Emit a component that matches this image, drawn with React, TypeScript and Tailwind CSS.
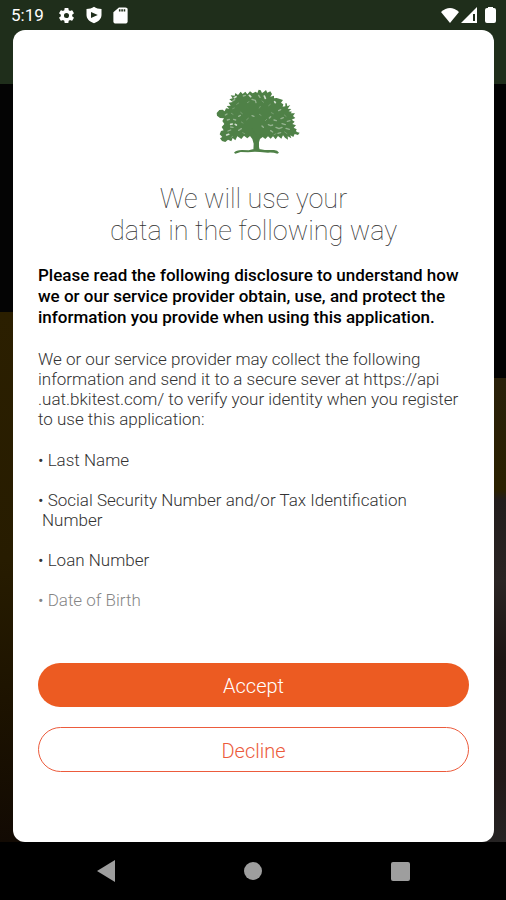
import type { ReactNode } from "react";

const items = [
	"Last Name",
	"Social Security Number and/or Tax Identification Number",
	"Loan Number",
	"Date of Birth",
];

function Icon({ className, children }: { className: string; children: ReactNode }) {
	return (
		<svg viewBox="0 0 24 24" fill="currentColor" className={className} aria-hidden="true">
			{children}
		</svg>
	);
}

function Tree() {
	return (
		<svg viewBox="48 42 252 198" className="h-[66px] w-[84px]" role="img" aria-label="Oak tree">
			<path
				fill="#4f8147"
				d="M160 228L161 206L157 192L150 183L142 190L132 182L124 192L112 184L106 196L98 189L94 199L84 194L76 201L66 198L60 190L67 186L59 178L63 168L71 166L65 156L73 147L67 138L72 130L60 129L51 122L50 114L58 105L68 104L74 109L78 100L88 101L80 93L92 92L86 83L98 81L88 73L98 70L92 61L104 62L106 54L114 60L122 50L128 57L136 50L142 58L150 49L158 55L167 50L172 54L176 44L182 46L186 54L192 50L198 45L202 53L211 49L216 57L211 65L222 62L222 70L230 69L240 72L249 75L243 83L250 88L248 95L256 94L256 85L260 85L262 94L271 90L263 101L274 102L266 109L276 110L272 115L285 115L279 123L286 129L275 134L284 140L277 147L288 151L281 158L290 163L287 170L299 173L294 180L284 177L280 186L271 181L274 190L263 184L264 194L255 188L249 181L244 191L234 183L227 193L219 184L212 191L204 184L196 192L188 186L180 192L177 202L177 216L180 228Z"
			/>
			<path
				fill="#4f8147"
				d="M102 233Q108 225 126 225L146 226L158 223L182 223L194 225L222 225Q233 226 237 233L232 236Q220 232 204 233L180 231Q160 229 144 232L122 231L106 236Z"
			/>
			<g fill="none" stroke="#fff" strokeLinecap="round" strokeLinejoin="round">
				<path
					strokeWidth="5"
					opacity=".75"
					d="M148 61L152 65M193 63L196 70M103 68L108 65M92 148L97 147M106 148L109 150M80 180L86 178M224 80L226 83"
				/>
				<path
					strokeWidth="4"
					opacity=".4"
					d="M98 78L104 74M130 63L136 61M156 73L166 76L168 83M176 61L180 67M116 124L121 121M101 133L107 135M82 135L88 133M92 156L99 157M116 166L124 161M84 168L92 165M156 122L162 124M205 149L212 152L218 150M228 157L237 161L246 157M246 146L256 149M258 160L268 163M212 167L218 171M234 175L242 173M222 135L229 137M243 131L250 128M262 139L270 137M208 129L212 125M236 107L242 104M76 120L81 117M186 153L190 157"
				/>
				<path
					strokeWidth="2"
					opacity=".35"
					d="M110 88L116 84M142 83L147 80M186 78L191 82M206 92L211 88M122 112L127 116M94 115L99 118M124 141L129 144M140 134L145 130M178 118L183 121M196 137L200 133M214 113L220 116M254 171L261 176M222 179L228 176M128 173L134 176M93 188L98 184M178 99L181 94M253 120L258 124M98 101L103 99"
				/>
			</g>
			<path
				fill="none"
				stroke="#4f8147"
				strokeWidth="3"
				d="M167 218L168 180L155 161M168 190L188 168L210 159M160 173L136 163M177 179L208 179M274 160L292 173"
			/>
		</svg>
	);
}

function StatusBar() {
	return (
		<header className="flex h-[30px] items-center justify-between pr-2 pl-[11px] text-white">
			<div className="flex items-center">
				<span className="w-[46px] text-[17px] leading-5">5:19</span>
				<Icon className="mr-[9px] size-[19px]">
					<path d="M19.14 12.94c.04-.3.06-.61.06-.94 0-.32-.02-.64-.07-.94l2.03-1.58a.49.49 0 0 0 .12-.61l-1.92-3.32a.49.49 0 0 0-.59-.22l-2.39.96c-.5-.38-1.03-.7-1.62-.94l-.36-2.54a.48.48 0 0 0-.48-.41h-3.84c-.24 0-.43.17-.47.41l-.36 2.54c-.59.24-1.13.57-1.62.94l-2.39-.96a.48.48 0 0 0-.59.22L2.74 8.87c-.12.21-.08.47.12.61l2.03 1.58c-.05.3-.09.63-.09.94s.02.64.07.94l-2.03 1.58a.49.49 0 0 0-.12.61l1.92 3.32c.12.22.37.29.59.22l2.39-.96c.5.38 1.03.7 1.62.94l.36 2.54c.05.24.24.41.48.41h3.84c.24 0 .44-.17.47-.41l.36-2.54c.59-.24 1.13-.56 1.62-.94l2.39.96c.22.08.47 0 .59-.22l1.92-3.32a.48.48 0 0 0-.12-.61zM12 15.2a3.2 3.2 0 1 1 0-6.4 3.2 3.2 0 0 1 0 6.4z" />
				</Icon>
				<Icon className="mr-2 size-[18px]">
					<path
						fillRule="evenodd"
						d="M12 1C9 3 6 4 2 4v8c0 5 4 9 10 11 6-2 10-6 10-11V4C18 4 15 3 12 1zM8 8l9 4-9 4z"
					/>
				</Icon>
				<Icon className="size-[19px]">
					<path
						fillRule="evenodd"
						d="M18 2H10L3 8v12c0 1 1 2 2 2h14c1 0 2-1 2-2V4c0-1-1-2-3-2zM10 4h2v3h-2zM13 4h2v3h-2zM16 4h2v3h-2z"
					/>
				</Icon>
			</div>
			<div className="flex items-center">
				<svg viewBox="0 0 20 18" className="h-[18px] w-5" fill="currentColor" aria-hidden="true">
					<path d="M10 17L1 6q9-8 18 0z" />
				</svg>
				<svg viewBox="0 0 20 18" className="h-[18px] w-5" fill="currentColor" aria-hidden="true">
					<path fillRule="evenodd" d="M17 1v16H1zM13 8h2v7h-2z" />
				</svg>
				<svg viewBox="0 0 14 18" className="ml-1 h-[18px] w-[14px]" fill="currentColor" aria-hidden="true">
					<path d="M4 1h5v1h1q2 0 2 2v11q0 2-2 2H3q-2 0-2-2V4q0-2 2-2h1z" />
				</svg>
			</div>
		</header>
	);
}

function NavBar() {
	return (
		<nav className="flex h-[58px] items-center justify-around bg-black px-8 text-[#9e9e9e]">
			<button type="button" aria-label="Back">
				<svg viewBox="0 0 20 22" className="h-[22px] w-5" fill="currentColor">
					<path d="M19 0v22L1 11z" />
				</svg>
			</button>
			<button type="button" aria-label="Home" className="size-[18px] rounded-full bg-[#9e9e9e]" />
			<button type="button" aria-label="Recent apps" className="size-[19px] rounded-xs bg-[#9e9e9e]" />
		</nav>
	);
}

function App() {
	return (
		<div className="relative isolate flex min-h-screen flex-col bg-black font-[Roboto,sans-serif]">
			{/* dimmed app behind the dialog */}
			<div className="absolute inset-0 -z-10 flex" aria-hidden="true">
				<div className="flex-1 bg-[linear-gradient(#1f2e1b_84px,#040404_84px,#040404_312px,#2b1f00_312px,#271c00_560px,#1d1300_700px,#120a03_842px)]" />
				<div className="flex-1 bg-[linear-gradient(#1f2e1b_84px,#020202_84px,#020202_378px,#29200a_378px,#2b2100_490px,#221d1c_500px,#2a2423_580px,#1d1513_660px,#221918_780px,#252323_842px)]" />
			</div>
			<StatusBar />
			<main className="mr-3 ml-[13px] flex flex-1 flex-col rounded-xl bg-white px-[25px] pt-[59px] pb-[70px]">
				<div className="flex justify-center pl-2">
					<Tree />
				</div>
				<h1 className="mt-7 text-center text-[27px] leading-8 font-thin text-[#333]">
					We will use your
					<br />
					data in the following way
				</h1>
				<p className="mt-[18px] text-[17px] leading-[21px] font-medium text-black">
					Please read the following disclosure to understand how we or our service provider obtain, use, and
					protect the information you provide when using this application.
				</p>
				<p className="mt-[21px] text-[17px] leading-5 font-light text-[#333]">
					We or our service provider may collect the following information and send it to a secure sever at
					https://api
					<wbr />
					.uat.bkitest.com/ to verify your identity when you register to use this application:
				</p>
				<ul className="mt-[21px] flex flex-col gap-5 text-[17px] leading-5 font-light text-[#333]">
					{items.map((item) => (
						<li key={item} className="pl-1 -indent-1 last:opacity-60">
							{`• ${item}`}
						</li>
					))}
				</ul>
				<div className="mt-auto flex flex-col gap-5 text-xl font-light">
					<button type="button" className="h-11 rounded-full bg-[#ec5b22] pt-[2px] text-white">
						Accept
					</button>
					<button type="button" className="h-[45px] rounded-full border border-[#ec5b3c] pt-[2px] text-[#ec5b3c]">
						Decline
					</button>
				</div>
			</main>
			<NavBar />
		</div>
	);
}

export default App;
